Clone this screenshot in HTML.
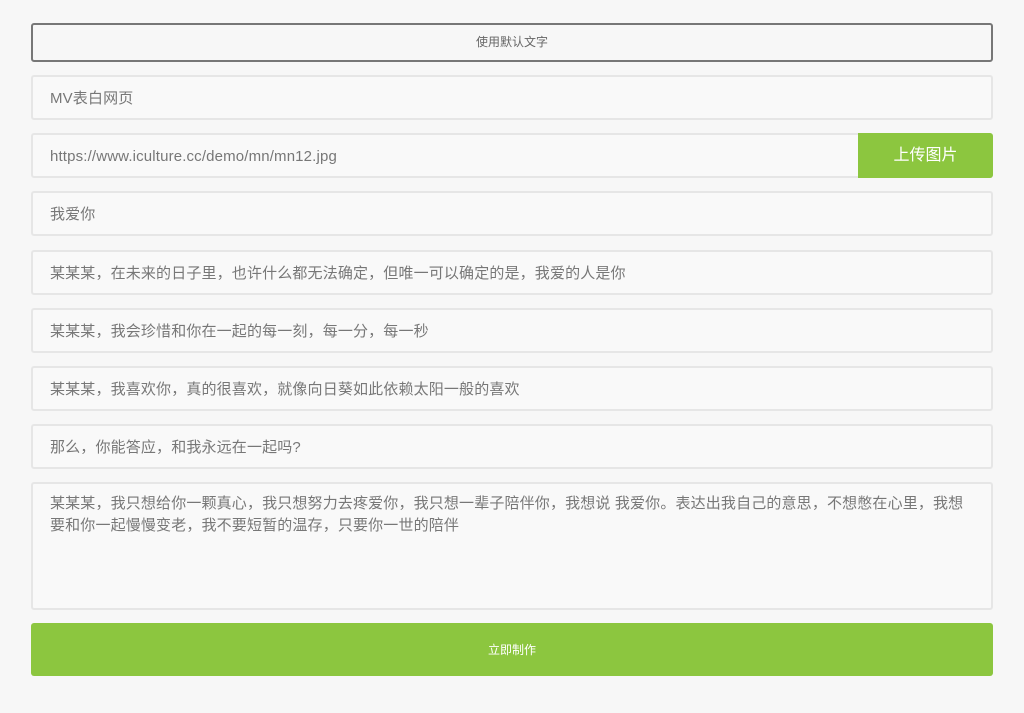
<!DOCTYPE html>
<html><head><meta charset="utf-8"><style>
body{margin:0;background:#f7f7f7;font-family:"Liberation Sans","Noto Sans CJK SC",sans-serif;}
.b{position:absolute;left:31px;width:962px;box-sizing:border-box;}
.top{top:23px;height:39px;border:2px solid #777;border-radius:3px;background:#f7f7f7;text-align:center;line-height:35px;font-size:12px;color:#666;}
.in{height:45px;border:2px solid #e6e6e6;border-radius:3px;background:#f9f9f9;padding-left:17px;line-height:43px;font-size:15px;color:#777;letter-spacing:0.15px;}
.ta{top:482px;height:128px;border:2px solid #e6e6e6;border-radius:3px;background:#f9f9f9;padding:9px 20px 0 17px;line-height:22px;font-size:15px;color:#777;letter-spacing:0.15px;}
.up{position:absolute;left:858px;top:133px;width:135px;height:45px;background:#8cc63f;color:#fff;font-size:16px;text-align:center;line-height:46px;border-radius:0 3px 3px 0;}
.sub{top:623px;height:53px;background:#8cc63f;border-radius:3px;color:#fff;font-size:12px;text-align:center;line-height:54px;}
</style></head><body>
<div class="b top">使用默认文字</div>
<div class="b in" style="top:75px">MV表白网页</div>
<div class="b in" style="top:133px">https://www.iculture.cc/demo/mn/mn12.jpg</div>
<div class="up">上传图片</div>
<div class="b in" style="top:191px">我爱你</div>
<div class="b in" style="top:250px">某某某，在未来的日子里，也许什么都无法确定，但唯一可以确定的是，我爱的人是你</div>
<div class="b in" style="top:308px">某某某，我会珍惜和你在一起的每一刻，每一分，每一秒</div>
<div class="b in" style="top:366px">某某某，我喜欢你，真的很喜欢，就像向日葵如此依赖太阳一般的喜欢</div>
<div class="b in" style="top:424px">那么，你能答应，和我永远在一起吗?</div>
<div class="b ta">某某某，我只想给你一颗真心，我只想努力去疼爱你，我只想一辈子陪伴你，我想说 我爱你。表达出我自己的意思，不想憋在心里，我想要和你一起慢慢变老，我不要短暂的温存，只要你一世的陪伴</div>
<div class="b sub">立即制作</div>
</body></html>
